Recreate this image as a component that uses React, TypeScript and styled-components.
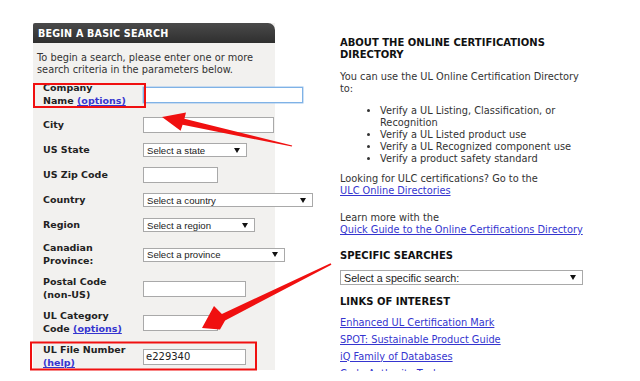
import React from 'react';
import styled, { createGlobalStyle } from 'styled-components';

const GlobalStyle = createGlobalStyle`
  html, body {
    margin: 0;
    padding: 0;
    background: #ffffff;
  }
  body {
    font-family: 'DejaVu Sans', Verdana, sans-serif;
    font-size: 9.8px;
    color: #333333;
  }
`;

const COLORS = {
  panel: '#f2f1ef',
  text: '#333333',
  heading: '#111111',
  label: '#222222',
  link: '#3535cf',
  border: '#a9a9a9',
  red: '#f01010',
};

type Field =
  | { kind: 'input'; width: number; value?: string; focused?: boolean }
  | { kind: 'select'; width: number; placeholder: string };

type Row = {
  label: string[];
  link?: string;
  height: number;
  field: Field;
};

const ROWS: Row[] = [
  { label: ['Company', 'Name'], link: '(options)', height: 36, field: { kind: 'input', width: 160, focused: true } },
  { label: ['City'], height: 25, field: { kind: 'input', width: 131 } },
  { label: ['US State'], height: 25, field: { kind: 'select', width: 104, placeholder: 'Select a state' } },
  { label: ['US Zip Code'], height: 25, field: { kind: 'input', width: 75 } },
  { label: ['Country'], height: 25, field: { kind: 'select', width: 170, placeholder: 'Select a country' } },
  { label: ['Region'], height: 25, field: { kind: 'select', width: 112, placeholder: 'Select a region' } },
  { label: ['Canadian', 'Province:'], height: 34, field: { kind: 'select', width: 142, placeholder: 'Select a province' } },
  { label: ['Postal Code', '(non-US)'], height: 34, field: { kind: 'input', width: 103 } },
  { label: ['UL Category', 'Code'], link: '(options)', height: 34, field: { kind: 'input', width: 75 } },
  { label: ['UL File Number'], link: '(help)', height: 34, field: { kind: 'input', width: 103, value: 'e229340' } },
];

const BULLETS = [
  ['Verify a UL Listing, Classification, or', 'Recognition'],
  ['Verify a UL Listed product use'],
  ['Verify a UL Recognized component use'],
  ['Verify a product safety standard'],
];

const INTEREST_LINKS = [
  'Enhanced UL Certification Mark',
  'SPOT: Sustainable Product Guide',
  'iQ Family of Databases',
  'Code Authority Tools',
];

const Caret = () => (
  <svg width='6' height='5' viewBox='0 0 6 5'>
    <path d='M0 0 H6 L3 5 Z' fill='#111' />
  </svg>
);

const App = () => {
  return (
    <>
      <GlobalStyle />
      <Page>
        <SearchPanel>
          <PanelHeader>BEGIN A BASIC SEARCH</PanelHeader>
          <PanelBody>
            <Intro>
              To begin a search, please enter one or more
              <br />
              search criteria in the parameters below.
            </Intro>
            {ROWS.map((row, index) => (
              <FormRow key={`${index}-row`} $h={row.height}>
                <Label>
                  {row.label.map((line, i) => (
                    <span key={i}>
                      {line}
                      {i === row.label.length - 1 && row.link && row.label.length > 1 && (
                        <>
                          {' '}
                          <Link href='#'>{row.link}</Link>
                        </>
                      )}
                      {i < row.label.length - 1 && <br />}
                    </span>
                  ))}
                  {row.link && row.label.length === 1 && (
                    <>
                      <br />
                      <Link href='#'>{row.link}</Link>
                    </>
                  )}
                </Label>
                {row.field.kind === 'input' ? (
                  <TextBox $w={row.field.width} $focused={!!row.field.focused}>
                    {row.field.value}
                  </TextBox>
                ) : (
                  <SelectBox $w={row.field.width}>
                    <span>{row.field.placeholder}</span>
                    <Caret />
                  </SelectBox>
                )}
              </FormRow>
            ))}
          </PanelBody>
        </SearchPanel>

        <InfoColumn>
          <Heading>
            ABOUT THE ONLINE CERTIFICATIONS
            <br />
            DIRECTORY
          </Heading>
          <Para $top={9}>
            You can use the UL Online Certification Directory
            <br />
            to:
          </Para>
          <BulletList>
            {BULLETS.map((lines, i) => (
              <li key={i}>
                {lines.map((l, j) => (
                  <React.Fragment key={j}>
                    {l}
                    {j < lines.length - 1 && <br />}
                  </React.Fragment>
                ))}
              </li>
            ))}
          </BulletList>
          <Para>
            Looking for ULC certifications? Go to the
            <br />
            <Link href='#' $regular>
              ULC Online Directories
            </Link>
          </Para>
          <Para $top={15}>
            Learn more with the
            <br />
            <Link href='#' $regular>
              Quick Guide to the Online Certifications Directory
            </Link>
          </Para>
          <Heading $top={14}>SPECIFIC SEARCHES</Heading>
          <SelectBox $w={243} $tall>
            <span>Select a specific search:</span>
            <Caret />
          </SelectBox>
          <Heading $top={11}>LINKS OF INTEREST</Heading>
          <LinkList>
            {INTEREST_LINKS.map((l, i) => (
              <li key={i}>
                <Link href='#' $regular>
                  {l}
                </Link>
              </li>
            ))}
          </LinkList>
        </InfoColumn>

        <Annotations width='640' height='381' viewBox='0 0 640 381'>
          <rect x='34' y='84' width='111' height='23' fill='none' stroke={COLORS.red} strokeWidth='2' />
          <rect x='31' y='342.5' width='225' height='27' fill='none' stroke={COLORS.red} strokeWidth='2' />
          <polygon
            points='292.2,145.4 184.4,118.8 186,112.6 162,117 180.6,130.8 182.6,124.8 291.8,146.6'
            fill={COLORS.red}
          />
          <polygon
            points='330.6,263.3 221.9,314 214,306 202,328 220,329.5 225.1,320.4 331.4,264.7'
            fill={COLORS.red}
          />
        </Annotations>
      </Page>
    </>
  );
};

// the captured page ends at ~370px, the rest of the frame is blank
const Page = styled.div`
  position: relative;
  width: 640px;
  height: 371px;
  overflow: hidden;
  display: flex;
  align-items: flex-start;
  gap: 65px;
  padding: 23px 0 0 33px;
  box-sizing: border-box;
`;

const SearchPanel = styled.div`
  width: 242px;
  height: 347px;
  flex-shrink: 0;
  display: flex;
  flex-direction: column;
  background-color: ${COLORS.panel};
`;

const PanelHeader = styled.div`
  height: 20px;
  flex-shrink: 0;
  display: flex;
  align-items: center;
  padding-left: 5px;
  border-radius: 2px 7px 0 0;
  background: linear-gradient(#4a4a4a, #2f2f2f);
  color: #ffffff;
  font-weight: bold;
  font-size: 9.6px;
  letter-spacing: 0.2px;
`;

const PanelBody = styled.div`
  flex-shrink: 0;
  padding: 9px 0 0 10px;
`;

const Intro = styled.p`
  margin: 0 0 0 -6px;
  line-height: 12.4px;
  color: ${COLORS.text};
`;

const FormRow = styled.div<{ $h: number }>`
  height: ${({ $h }) => $h}px;
  display: grid;
  grid-template-columns: 100px auto;
  align-items: center;
`;

const Label = styled.div`
  font-weight: bold;
  font-size: 9.5px;
  color: ${COLORS.label};
  line-height: 12.4px;
`;

const Link = styled.a<{ $regular?: boolean }>`
  color: ${COLORS.link};
  text-decoration: underline;
  font-weight: ${({ $regular }) => ($regular ? 'normal' : 'bold')};
`;

const TextBox = styled.div<{ $w: number; $focused: boolean }>`
  width: ${({ $w }) => $w}px;
  height: 16px;
  box-sizing: border-box;
  background: #ffffff;
  border: 1px solid ${({ $focused }) => ($focused ? '#7fb2e6' : COLORS.border)};
  box-shadow: ${({ $focused }) => ($focused ? '0 0 0 0.5px #9cc4ee' : 'none')};
  font-family: 'DejaVu Sans', Verdana, sans-serif;
  font-size: 10px;
  color: #222;
  padding-left: 2px;
  display: flex;
  align-items: center;
`;

const SelectBox = styled.div<{ $w: number; $tall?: boolean }>`
  width: ${({ $w }) => $w}px;
  height: ${({ $tall }) => ($tall ? 15 : 14)}px;
  margin-top: ${({ $tall }) => ($tall ? 8 : 0)}px;
  flex-shrink: 0;
  box-sizing: border-box;
  background: #ffffff;
  border: 1px solid ${COLORS.border};
  display: flex;
  align-items: center;
  justify-content: space-between;
  padding: 0 6px 0 3px;
  font-family: 'Liberation Sans', Arial, sans-serif;
  font-size: ${({ $tall }) => ($tall ? 10.7 : 9.6)}px;
  color: #222;
`;

const InfoColumn = styled.div`
  width: 260px;
  padding-top: 14px;
  display: flex;
  flex-direction: column;
  align-items: flex-start;
`;

const Heading = styled.h3<{ $top?: number }>`
  margin: ${({ $top }) => $top ?? 0}px 0 0 0;
  font-size: 10px;
  line-height: 12.3px;
  font-weight: bold;
  color: ${COLORS.heading};
`;

const Para = styled.p<{ $top?: number }>`
  margin: ${({ $top }) => $top ?? 8}px 0 0 0;
  line-height: 12px;
  color: ${COLORS.text};
`;

const BulletList = styled.ul`
  margin: 10px 0 0 0;
  padding-left: 40px;
  line-height: 12.1px;
  color: ${COLORS.text};
`;

const LinkList = styled.ul`
  list-style: none;
  margin: 8px 0 0 0;
  padding: 0;
  display: flex;
  flex-direction: column;
  gap: 4.7px;
  line-height: 12.3px;
`;

const Annotations = styled.svg`
  position: absolute;
  left: 0;
  top: 0;
  pointer-events: none;
`;

export default App;
